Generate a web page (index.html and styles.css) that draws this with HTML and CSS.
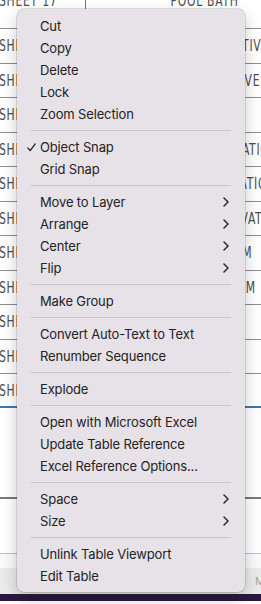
FILE: index.html
```html
<!DOCTYPE html>
<html lang="en">
<head>
  <meta charset="UTF-8">
  <meta name="viewport" content="width=device-width,initial-scale=1">
  <title>Context menu</title>
  <link rel="stylesheet" href="styles.css">
</head>
<body>
  <!-- sheet index table behind the menu -->
  <div class="sheet">
    <div class="row row-head"><span class="num"><span class="cap">SHEET 17</span></span><span class="title"><span class="cap">POOL BATH</span></span></div>
    <div class="row"><span class="num"><span class="cap">SHEET 18</span></span><span class="title"><span class="cap">AERIAL PERSPECTIVE</span></span></div>
    <div class="row"><span class="num"><span class="cap">SHEET 19</span></span><span class="title"><span class="cap">POOL PERSPECTIVES</span></span></div>
    <div class="row"><span class="num"><span class="cap">SHEET 20</span></span><span class="title"><span class="cap">SITE PLAN</span></span></div>
    <div class="row"><span class="num"><span class="cap">SHEET 21</span></span><span class="title"><span class="cap">NORTH-EAST ELEVATION</span></span></div>
    <div class="row"><span class="num"><span class="cap">SHEET 22</span></span><span class="title"><span class="cap">SOUTH-WEST ELEVATIONS</span></span></div>
    <div class="row"><span class="num"><span class="cap">SHEET 23</span></span><span class="title"><span class="cap">NORTH &amp; EAST ELEVATION</span></span></div>
    <div class="row"><span class="num"><span class="cap">SHEET 24</span></span><span class="title"><span class="cap">STAIR DIAGRAM</span></span></div>
    <div class="row"><span class="num"><span class="cap">SHEET 25</span></span><span class="title"><span class="cap">SPACE PROGRAM</span></span></div>
    <div class="row"><span class="num"><span class="cap">SHEET 26</span></span><span class="title"><span class="cap">ROOF</span></span></div>
    <div class="row"><span class="num"><span class="cap">SHEET 27</span></span><span class="title"><span class="cap">LIGHTING</span></span></div>
    <div class="row row-last"><span class="num"><span class="cap">SHEET 28</span></span><span class="title"><span class="cap">NOTES</span></span></div>
    <div class="gap gap-a"></div>
    <div class="gap gap-b"></div>
    <div class="gap gap-c"></div>
    <div class="status"><span>M</span></div>
    <div class="dock"></div>
  </div>

  <!-- context menu -->
  <div class="menu">
    <div class="item">Cut</div>
    <div class="item">Copy</div>
    <div class="item">Delete</div>
    <div class="item">Lock</div>
    <div class="item">Zoom Selection</div>
    <div class="sep"></div>
    <div class="item checked">
      <svg class="check" width="9" height="9" viewBox="0 0 9 9"><path d="M0.8 4.9 L3.2 7.6 L8.2 0.9" fill="none" stroke="#222" stroke-width="1.3" stroke-linecap="round" stroke-linejoin="round"/></svg>
      Object Snap
    </div>
    <div class="item">Grid Snap</div>
    <div class="sep"></div>
    <div class="item">Move to Layer <svg class="chev" width="6" height="10" viewBox="0 0 6 10"><path d="M1 1 L5 5 L1 9" fill="none" stroke="#2a2a2a" stroke-width="1.5" stroke-linecap="round" stroke-linejoin="round"/></svg></div>
    <div class="item">Arrange <svg class="chev" width="6" height="10" viewBox="0 0 6 10"><path d="M1 1 L5 5 L1 9" fill="none" stroke="#2a2a2a" stroke-width="1.5" stroke-linecap="round" stroke-linejoin="round"/></svg></div>
    <div class="item">Center <svg class="chev" width="6" height="10" viewBox="0 0 6 10"><path d="M1 1 L5 5 L1 9" fill="none" stroke="#2a2a2a" stroke-width="1.5" stroke-linecap="round" stroke-linejoin="round"/></svg></div>
    <div class="item">Flip <svg class="chev" width="6" height="10" viewBox="0 0 6 10"><path d="M1 1 L5 5 L1 9" fill="none" stroke="#2a2a2a" stroke-width="1.5" stroke-linecap="round" stroke-linejoin="round"/></svg></div>
    <div class="sep"></div>
    <div class="item">Make Group</div>
    <div class="sep"></div>
    <div class="item">Convert Auto-Text to Text</div>
    <div class="item">Renumber Sequence</div>
    <div class="sep"></div>
    <div class="item">Explode</div>
    <div class="sep"></div>
    <div class="item">Open with Microsoft Excel</div>
    <div class="item">Update Table Reference</div>
    <div class="item">Excel Reference Options...</div>
    <div class="sep"></div>
    <div class="item">Space <svg class="chev" width="6" height="10" viewBox="0 0 6 10"><path d="M1 1 L5 5 L1 9" fill="none" stroke="#2a2a2a" stroke-width="1.5" stroke-linecap="round" stroke-linejoin="round"/></svg></div>
    <div class="item">Size <svg class="chev" width="6" height="10" viewBox="0 0 6 10"><path d="M1 1 L5 5 L1 9" fill="none" stroke="#2a2a2a" stroke-width="1.5" stroke-linecap="round" stroke-linejoin="round"/></svg></div>
    <div class="sep"></div>
    <div class="item">Unlink Table Viewport</div>
    <div class="item">Edit Table</div>
  </div>
</body>
</html>
```

FILE: styles.css
```css
/* ---- reset ---- */
* { margin:0; padding:0; box-sizing:border-box; }
html, body { height:100%; overflow:hidden; background:#fff; }

/* ---- sheet table ---- */
.sheet { width:324px; display:flex; flex-direction:column; font-family:"DejaVu Sans Condensed","DejaVu Sans",sans-serif; font-size:16px; color:#4d4d4d; }
.row { display:flex; height:34.5px; border-bottom:1.5px solid #8e8e8e; align-items:center; }
.row-head { height:29px; }
.row-head .cap { margin-top:-9px; }
.row-last { height:34px; border-bottom:2px solid #3b79ad; }
.num { width:86px; flex:none; height:100%; display:flex; align-items:center; border-right:1px solid #6f6f6f; overflow:hidden; white-space:nowrap; }
.row-head .num, .row-head .title { align-items:flex-start; }
.title { flex:1; height:100%; display:flex; align-items:center; justify-content:center; overflow:hidden; white-space:nowrap; }
.cap { display:inline-block; transform:scaleX(.75); letter-spacing:1px; }
.num .cap { transform-origin:left center; margin-left:-1px; }

.gap { background:#fff; }
.gap-a { height:91px; border-bottom:2px solid #7a7a7a; }
.gap-b { height:55px; border-bottom:1px solid #b3c4cc; }
.gap-c { height:14px; background:#fafafa; }
.status { height:26px; background:#ebebeb; font-family:Inter,sans-serif; font-size:11px; color:#a5a5a5; padding-left:255px; display:flex; align-items:center; }
.dock { height:7px; background:#2c1840; }

/* ---- context menu ---- */
.menu { position:absolute; left:17px; top:9px; width:228px; padding:6px 0 5px; background:#e7e2e7; border-radius:7px;
  box-shadow:0 0 0 .5px rgba(0,0,0,.22), 0 6px 16px rgba(0,0,0,.22);
  font-family:Inter,"Liberation Sans",sans-serif; font-size:13px; letter-spacing:-.15px; color:#232323; }
.item { position:relative; height:22px; display:flex; align-items:center; justify-content:space-between; padding:0 16px 0 23px; white-space:nowrap; }
.check { position:absolute; left:10px; top:7px; }
.sep { height:1px; margin:5px 14px; background:#c9c4c9; }
```
